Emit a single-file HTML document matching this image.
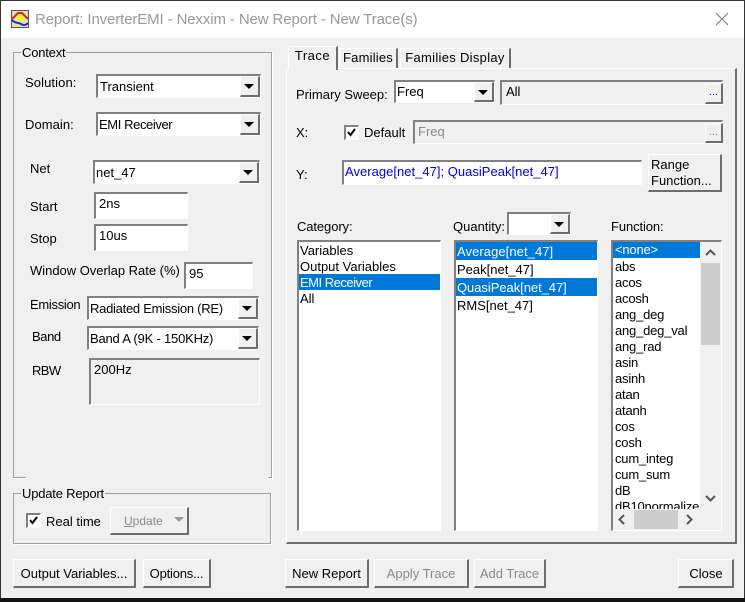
<!DOCTYPE html>
<html><head><meta charset="utf-8"><style>
html,body{margin:0;padding:0;width:745px;height:602px;overflow:hidden;background:#f0f0f0}
*{box-sizing:border-box}
body{font-family:"Liberation Sans",sans-serif;font-size:13px;color:#000;position:relative}
.a,.t,.s,.b,.g,.sel{position:absolute}
.t{white-space:nowrap;line-height:16px;height:16px}
.s{background:#fff;border-style:solid;border-width:2px 1px 1px 2px;border-color:#808080 #fff #fff #808080}
.s.g2{background:#f0f0f0}
.b{background:#f0f0f0;border-top:1px solid #fff;border-left:1px solid #fff;border-right:2px solid #6d6d6d;border-bottom:2px solid #6d6d6d;text-align:center;white-space:nowrap;line-height:28px}
.g{border:1px solid #a0a0a0;box-shadow:1px 1px 0 #fff}
.lg{position:absolute;background:#f0f0f0;line-height:16px;padding:0 1px;white-space:nowrap}
.ar{position:absolute;right:0;top:0;bottom:0;width:20px;background:#f0f0f0;border-top:1px solid #fff;border-left:1px solid #fff;border-right:2px solid #6d6d6d;border-bottom:2px solid #6d6d6d}
.ar:after{content:"";position:absolute;left:3px;top:7px;border-left:5px solid transparent;border-right:5px solid transparent;border-top:5px solid #000}
.dis{color:#8a8a8a}
.sel{background:#0078d7;left:0;right:0;height:16px}
.li{position:absolute;left:2px;line-height:16px;white-space:nowrap}
.w{color:#fff}
.fn .li{letter-spacing:-.2px}
</style></head><body>
<!-- window frame -->
<div class="a" style="left:0;top:0;width:745px;height:1px;background:#333"></div>
<div class="a" style="left:0;top:0;width:1px;height:602px;background:#333"></div>
<div class="a" style="right:0;top:0;width:1px;height:602px;background:#333"></div>
<div class="a" style="left:0;top:598px;width:745px;height:4px;background:#111"></div>
<div class="a" style="left:1px;top:1px;width:743px;height:37px;background:#fff"></div>
<svg class="a" style="left:11px;top:10px" width="18" height="18" viewBox="0 0 18 18"><rect width="18" height="18" fill="#555"/><rect x="1" y="1" width="16" height="16" fill="#e8e0b0"/><circle cx="9" cy="8" r="4" fill="#f5f040"/><path d="M1 9L7 3H11L17 9" stroke="#e02020" stroke-width="2" fill="none"/><path d="M1 10C5 14 7 12 10 14S15 15 17 13" stroke="#1530d0" stroke-width="2" fill="none"/></svg>
<div class="t" style="left:35px;top:11px;font-size:15px;color:#999;line-height:18px;height:18px;letter-spacing:-.12px">Report: InverterEMI - Nexxim - New Report - New Trace(s)</div>
<svg class="a" style="left:715px;top:12px" width="14" height="14"><path d="M1 1L13 13M13 1L1 13" stroke="#777" stroke-width="1" fill="none"/></svg>

<!-- Context -->
<div class="g" style="left:13px;top:52px;width:259px;height:426px"></div>
<div class="a" style="left:26px;top:477px;width:242px;height:3px;background:#f0f0f0"></div>
<div class="lg" style="left:21px;top:45px;letter-spacing:-.2px">Context</div>
<div class="t" style="left:25px;top:75px;letter-spacing:.1px">Solution:</div>
<div class="s" style="left:96px;top:74px;width:165px;height:24px"><div class="ar"></div><div class="t" style="left:2px;top:3px">Transient</div></div>
<div class="t" style="left:25px;top:117px;letter-spacing:.05px">Domain:</div>
<div class="s" style="left:96px;top:112px;width:165px;height:24px"><div class="ar"></div><div class="t" style="left:1px;top:3px;letter-spacing:-.4px">EMI Receiver</div></div>
<div class="t" style="left:30px;top:161px">Net</div>
<div class="s" style="left:93px;top:160px;width:167px;height:24px"><div class="ar"></div><div class="t" style="left:1px;top:3px">net_47</div></div>
<div class="t" style="left:30px;top:199px">Start</div>
<div class="s" style="left:94px;top:192px;width:94px;height:27px"><div class="t" style="left:3px;top:2px">2ns</div></div>
<div class="t" style="left:30px;top:231px">Stop</div>
<div class="s" style="left:94px;top:224px;width:94px;height:27px"><div class="t" style="left:3px;top:2px">10us</div></div>
<div class="t" style="left:30px;top:263px;letter-spacing:-.02px">Window Overlap Rate (%)</div>
<div class="s" style="left:184px;top:262px;width:69px;height:27px"><div class="t" style="left:3px;top:2px">95</div></div>
<div class="t" style="left:30px;top:297px;letter-spacing:-.3px">Emission</div>
<div class="s" style="left:87px;top:296px;width:172px;height:24px"><div class="ar"></div><div class="t" style="left:1px;top:3px;letter-spacing:-.27px">Radiated Emission (RE)</div></div>
<div class="t" style="left:32px;top:329px;letter-spacing:-.4px">Band</div>
<div class="s" style="left:87px;top:326px;width:172px;height:24px"><div class="ar"></div><div class="t" style="left:1px;top:3px;letter-spacing:-.2px">Band A (9K - 150KHz)</div></div>
<div class="t" style="left:32px;top:363px;letter-spacing:-.6px">RBW</div>
<div class="s g2" style="left:89px;top:358px;width:171px;height:47px"><div class="t" style="left:3px;top:2px">200Hz</div></div>

<!-- Update report -->
<div class="g" style="left:13px;top:493px;width:258px;height:51px"></div>
<div class="lg" style="left:21px;top:486px;letter-spacing:-.2px">Update Report</div>
<div class="s" style="left:26px;top:513px;width:15px;height:15px"><svg style="position:absolute;left:0;top:0" width="12" height="12"><path d="M2 5L4.500 8L9 2" stroke="#000" stroke-width="2" fill="none"/></svg></div>
<div class="t" style="left:46px;top:514px">Real time</div>
<div class="b dis" style="left:110px;top:507px;width:79px;height:28px;font-size:12px;text-align:left;padding-left:13px;line-height:26px"><u>U</u>pdate<div class="a" style="left:63px;top:9px;border-left:5px solid transparent;border-right:5px solid transparent;border-top:5px solid #999"></div></div>
<div class="b" style="left:13px;top:559px;width:123px;height:29px">Output Variables...</div>
<div class="b" style="left:143px;top:559px;width:68px;height:29px;letter-spacing:-.2px">Options...</div>

<!-- Tabs -->
<div class="a" style="left:286px;top:68px;width:451px;height:476px;background:#f0f0f0;border-top:1px solid #fff;border-left:1px solid #fff;border-right:2px solid #6d6d6d;border-bottom:2px solid #6d6d6d"></div>
<div class="a" style="left:288px;top:46px;width:50px;height:24px;background:#f0f0f0;border-top:1px solid #fff;border-left:1px solid #fff;border-right:2px solid #6d6d6d;text-align:center;line-height:18px;letter-spacing:.5px">Trace</div>
<div class="a" style="left:339px;top:48px;width:59px;height:20px;border-top:1px solid #fff;border-left:1px solid #fff;border-right:2px solid #6d6d6d;text-align:center;line-height:18px;letter-spacing:.2px">Families</div>
<div class="a" style="left:400px;top:48px;width:111px;height:20px;border-top:1px solid #fff;border-left:1px solid #fff;border-right:2px solid #6d6d6d;text-align:center;line-height:18px;letter-spacing:.3px">Families Display</div>

<div class="t" style="left:296px;top:87px">Primary Sweep:</div>
<div class="s" style="left:394px;top:80px;width:101px;height:23px"><div class="ar"></div><div class="t" style="left:1px;top:2px">Freq</div></div>
<div class="s g2" style="left:500px;top:80px;width:223px;height:25px"><div class="t" style="left:4px;top:2px">All</div><div class="b" style="left:203px;top:1px;width:18px;height:21px;line-height:17px;color:#0000e0;font-size:11px">...</div></div>
<div class="t" style="left:296px;top:125px">X:</div>
<div class="s" style="left:344px;top:125px;width:15px;height:15px"><svg style="position:absolute;left:0;top:0" width="12" height="12"><path d="M2 5L4.500 8L9 2" stroke="#000" stroke-width="2" fill="none"/></svg></div>
<div class="t" style="left:364px;top:125px">Default</div>
<div class="s g2" style="left:413px;top:120px;width:310px;height:24px"><div class="t dis" style="left:3px;top:2px">Freq</div><div class="b dis" style="left:290px;top:1px;width:18px;height:20px;line-height:17px;font-size:11px">...</div></div>
<div class="t" style="left:296px;top:167px">Y:</div>
<div class="s" style="left:342px;top:160px;width:300px;height:25px"><div class="t" style="left:1px;top:2px;color:#0000e0;letter-spacing:.02px">Average[net_47]; QuasiPeak[net_47]</div></div>
<div class="b" style="left:648px;top:154px;width:74px;height:38px;text-align:left;padding-left:2px;line-height:16px;padding-top:2px;white-space:normal">Range<br>Function...</div>

<div class="t" style="left:297px;top:219px;letter-spacing:-.1px">Category:</div>
<div class="t" style="left:453px;top:219px">Quantity:</div>
<div class="s" style="left:507px;top:212px;width:64px;height:23px"><div class="ar"></div></div>
<div class="t" style="left:611px;top:219px;letter-spacing:-.1px">Function:</div>

<div class="s" style="left:297px;top:240px;width:144px;height:291px;overflow:hidden">
<div class="sel" style="top:32px"></div>
<div class="li" style="top:1px;left:1px">Variables</div>
<div class="li" style="top:17px;left:1px">Output Variables</div>
<div class="li w" style="top:33px;left:1px;letter-spacing:-.5px">EMI Receiver</div>
<div class="li" style="top:49px;left:1px">All</div>
</div>
<div class="s" style="left:454px;top:240px;width:144px;height:291px;overflow:hidden">
<div class="sel" style="top:0;height:18px"></div>
<div class="sel" style="top:36px;height:18px"></div>
<div class="li w" style="top:2px;left:1px;letter-spacing:.07px">Average[net_47]</div>
<div class="li" style="top:20px;left:1px">Peak[net_47]</div>
<div class="li w" style="top:38px;left:1px;letter-spacing:-.05px">QuasiPeak[net_47]</div>
<div class="li" style="top:56px;left:1px">RMS[net_47]</div>
</div>
<div class="s fn" style="left:611px;top:240px;width:111px;height:291px;background:#f0f0f0;overflow:hidden">
<div class="a" style="left:0;top:0;width:87px;height:267px;background:#fff;overflow:hidden">
<div class="sel" style="top:0"></div>
<div class="li w" style="top:0">&lt;none&gt;</div>
<div class="li" style="top:17px">abs</div>
<div class="li" style="top:33px">acos</div>
<div class="li" style="top:49px">acosh</div>
<div class="li" style="top:65px">ang_deg</div>
<div class="li" style="top:81px">ang_deg_val</div>
<div class="li" style="top:97px">ang_rad</div>
<div class="li" style="top:113px">asin</div>
<div class="li" style="top:129px">asinh</div>
<div class="li" style="top:145px">atan</div>
<div class="li" style="top:161px">atanh</div>
<div class="li" style="top:177px">cos</div>
<div class="li" style="top:193px">cosh</div>
<div class="li" style="top:209px">cum_integ</div>
<div class="li" style="top:225px">cum_sum</div>
<div class="li" style="top:241px">dB</div>
<div class="li" style="top:257px">dB10normalize</div>
</div>
<div class="a" style="left:88px;top:21px;width:19px;height:82px;background:#cdcdcd"></div>
<div class="a" style="left:21px;top:268px;width:44px;height:19px;background:#cdcdcd"></div>
<svg class="a" style="left:88px;top:0" width="19" height="267"><path d="M5 13L9.500 8.500L14 13M5 254L9.500 258.500L14 254" stroke="#555" stroke-width="2" fill="none"/></svg>
<svg class="a" style="left:0;top:268px" width="87" height="19"><path d="M11 5L6.500 9.500L11 14M74 5L78.500 9.500L74 14" stroke="#555" stroke-width="2" fill="none"/></svg>
</div>

<!-- bottom buttons -->
<div class="b" style="left:285px;top:559px;width:84px;height:29px">New Report</div>
<div class="b dis" style="left:374px;top:559px;width:95px;height:29px">Apply Trace</div>
<div class="b dis" style="left:474px;top:559px;width:72px;height:29px">Add Trace</div>
<div class="b" style="left:678px;top:559px;width:56px;height:29px;padding-left:1px">Close</div>
</body></html>
